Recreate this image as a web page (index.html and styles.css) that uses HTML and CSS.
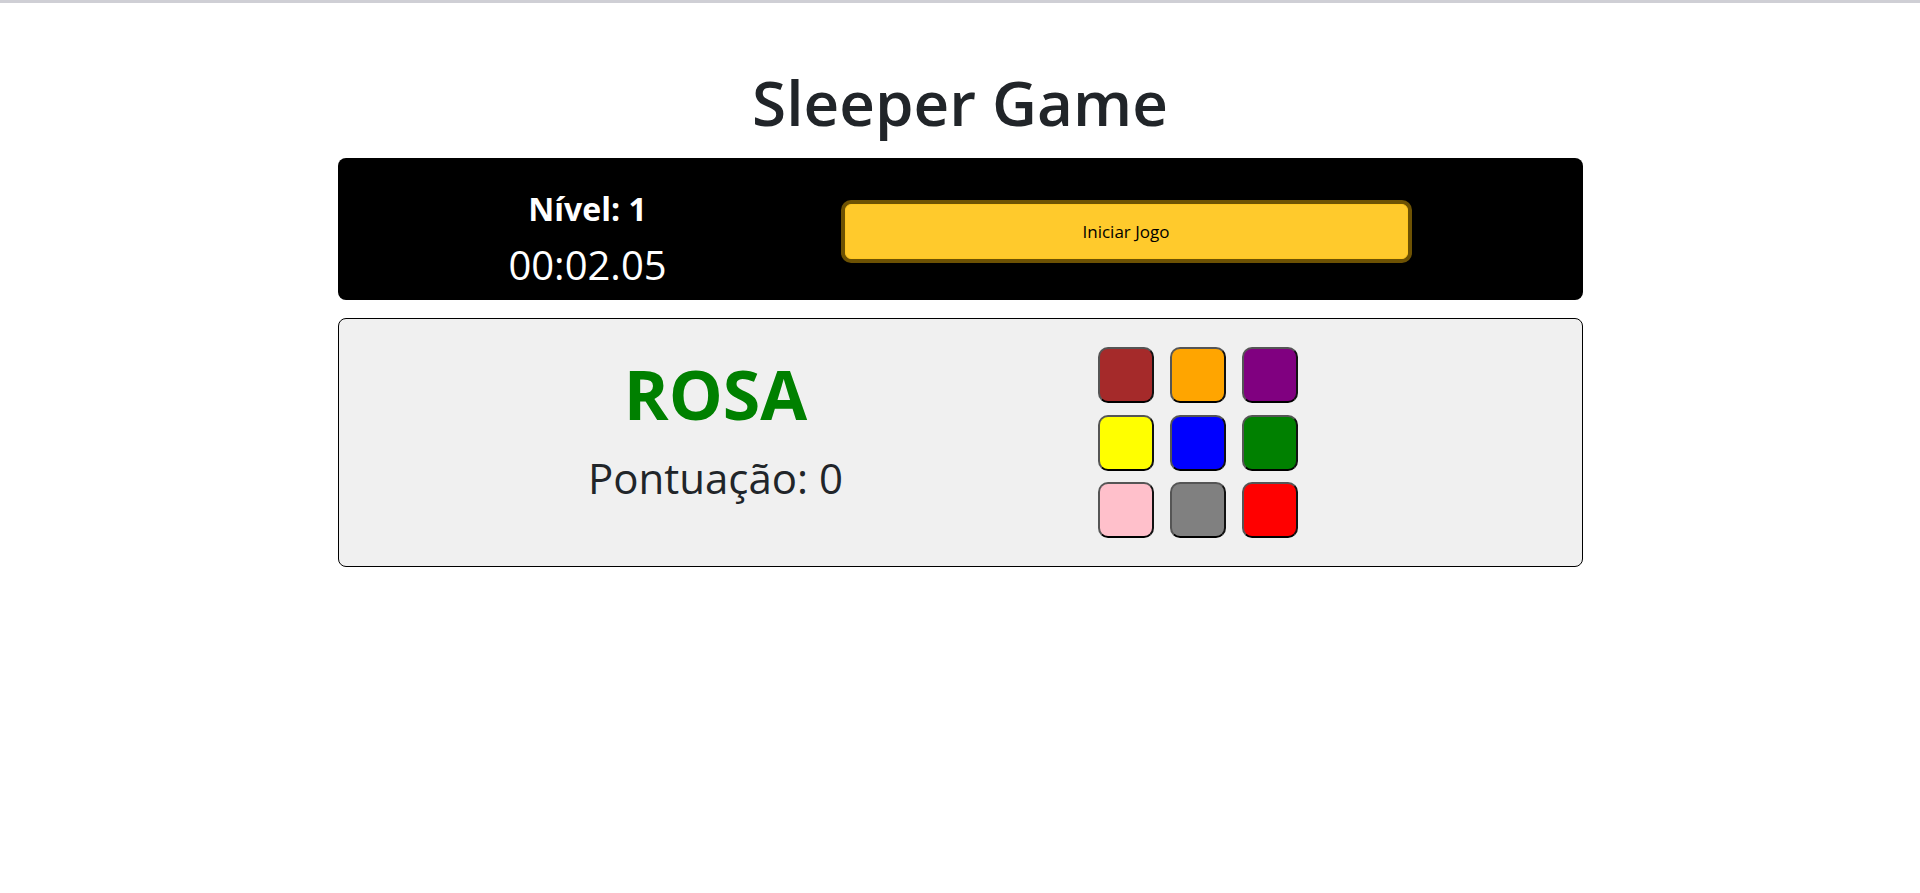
FILE: index.html
```html
<!DOCTYPE html>
<html lang="pt-BR">
<head>
<meta charset="utf-8">
<title>Sleeper Game</title>
<link rel="stylesheet" href="styles.css">
</head>
<body>
<div class="topline"></div>
<main class="page">
  <h1 class="title">Sleeper Game</h1>
  <section class="hud">
    <div class="stats">
      <h2 class="level">Nível: 1</h2>
      <div class="timer">00:02.05</div>
    </div>
    <button class="start-btn" type="button">Iniciar Jogo</button>
  </section>
  <section class="board">
    <div class="word-block">
      <div class="word">ROSA</div>
      <div class="score">Pontuação: 0</div>
    </div>
    <div class="palette">
      <button class="swatch c-brown" type="button" aria-label="marrom"></button>
      <button class="swatch c-orange" type="button" aria-label="laranja"></button>
      <button class="swatch c-purple" type="button" aria-label="roxo"></button>
      <button class="swatch c-yellow" type="button" aria-label="amarelo"></button>
      <button class="swatch c-blue" type="button" aria-label="azul"></button>
      <button class="swatch c-green" type="button" aria-label="verde"></button>
      <button class="swatch c-pink" type="button" aria-label="rosa"></button>
      <button class="swatch c-gray" type="button" aria-label="cinza"></button>
      <button class="swatch c-red" type="button" aria-label="vermelho"></button>
    </div>
  </section>
</main>
</body>
</html>
```
FILE: styles.css
```css
* { box-sizing: border-box; }

html, body {
  margin: 0;
  padding: 0;
  background: #ffffff;
}

body {
  font-family: "Open Sans", "Noto Sans", sans-serif;
  color: #212529;
}

.topline {
  height: 3px;
  background: #cfcfd5;
}

.page {
  width: 1245px;
  margin: 0 auto;
}

.title {
  margin: 61px 0 17px;
  font-size: 62px;
  font-weight: 600;
  line-height: 1.24;
  text-align: center;
  color: #212529;
}

.hud {
  display: flex;
  align-items: flex-start;
  gap: 157px;
  background: #000000;
  border-radius: 8px;
  padding: 32px 0 11px 150px;
}

.stats {
  width: 200px;
  text-align: center;
  color: #ffffff;
}

.level {
  margin: 0;
  font-size: 32px;
  font-weight: 700;
  line-height: 1.2;
}

.timer {
  margin-top: 13px;
  font-size: 40px;
  font-weight: 400;
  line-height: 1.2;
}

.start-btn {
  margin-top: 14px;
  width: 563px;
  height: 55px;
  background: #ffca2c;
  border: 1px solid #ffc720;
  border-radius: 6px;
  box-shadow: 0 0 0 4px rgba(217, 164, 6, 0.5);
  font-family: "Open Sans", "Noto Sans", sans-serif;
  font-size: 17px;
  color: #000000;
  padding: 0;
  cursor: pointer;
}

.board {
  margin-top: 18px;
  display: flex;
  align-items: flex-start;
  gap: 232px;
  background: #f0f0f0;
  border: 1px solid #000000;
  border-radius: 8px;
  padding: 28px 0 28px 227px;
}

.word-block {
  width: 300px;
  padding-top: 6px;
  text-align: center;
}

.word {
  font-size: 68px;
  font-weight: 700;
  line-height: 1.2;
  color: #008000;
}

.score {
  margin-top: 18px;
  font-size: 42px;
  line-height: 1.2;
  color: #212529;
}

.palette {
  display: grid;
  grid-template-columns: repeat(3, 56px);
  grid-auto-rows: 56px;
  column-gap: 16px;
  row-gap: 11.5px;
}

.swatch {
  width: 56px;
  height: 56px;
  padding: 0;
  border: 2px solid;
  border-color: #555555 #111111 #000000 #555555;
  border-radius: 10px;
  cursor: pointer;
}

.c-brown { background: #a52a2a; }
.c-orange { background: #ffa500; }
.c-purple { background: #800080; }
.c-yellow { background: #ffff00; }
.c-blue { background: #0000ff; }
.c-green { background: #008000; }
.c-pink { background: #ffc0cb; }
.c-gray { background: #808080; }
.c-red { background: #ff0000; }
```
